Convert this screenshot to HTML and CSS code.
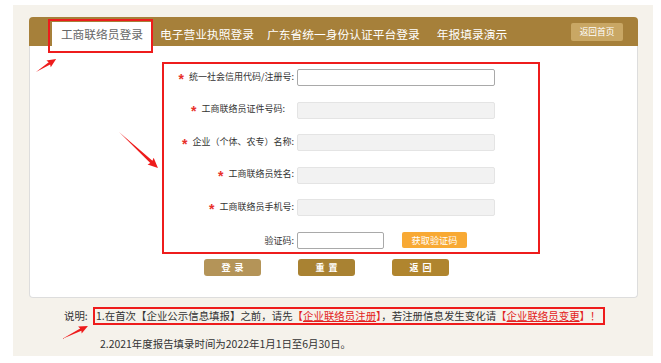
FILE: index.html
```html
<!DOCTYPE html>
<html lang="zh-CN">
<head>
  <meta charset="UTF-8">
  <meta name="viewport" content="width=device-width, initial-scale=1.0">
  <title>工商联络员登录</title>
  <link rel="stylesheet" href="styles.css">
</head>
<body>
  <div class="page">
    <div class="panel">
      <div class="tabs">
        <a class="tab active">工商联络员登录</a>
        <a class="tab tab-2">电子营业执照登录</a>
        <a class="tab tab-3">广东省统一身份认证平台登录</a>
        <a class="tab tab-4">年报填录演示</a>
        <a class="home-btn">返回首页</a>
      </div>
      <div class="panel-body">
        <div class="login-form">
          <div class="row">
            <label class="label"><span class="star">*</span>统一社会信用代码/注册号:</label>
            <input class="field" type="text">
          </div>
          <div class="row">
            <label class="label label-shift"><span class="star">*</span>工商联络员证件号码:</label>
            <input class="field disabled" type="text" disabled>
          </div>
          <div class="row">
            <label class="label"><span class="star">*</span>企业（个体、农专）名称:</label>
            <input class="field disabled" type="text" disabled>
          </div>
          <div class="row">
            <label class="label"><span class="star">*</span>工商联络员姓名:</label>
            <input class="field disabled" type="text" disabled>
          </div>
          <div class="row">
            <label class="label"><span class="star">*</span>工商联络员手机号:</label>
            <input class="field disabled" type="text" disabled>
          </div>
          <div class="row">
            <label class="label">验证码:</label>
            <input class="field code" type="text">
            <button class="code-btn">获取验证码</button>
          </div>
        </div>
        <div class="actions">
          <button class="btn btn-login">登&nbsp;&nbsp;录</button>
          <button class="btn btn-reset">重&nbsp;&nbsp;置</button>
          <button class="btn btn-back">返&nbsp;&nbsp;回</button>
        </div>
      </div>
    </div>

    <div class="notes">
      <p class="note-line">
        <span class="note-title">说明:</span><span class="note-box">1.在首次【企业公示信息填报】之前，请先<span class="red">【<u>企业联络员注册</u>】</span>，若注册信息发生变化请<span class="red">【<u>企业联络员变更</u>】！</span></span>
      </p>
      <p class="note-line second">2.2021年度报告填录时间为2022年1月1日至6月30日。</p>
    </div>
  </div>

  <!-- annotation arrows -->
  <svg class="arrows" width="661" height="363" viewBox="0 0 661 363">
    <g transform="translate(36 72) rotate(-33)">
      <polygon points="0,0 16,-1.3 15,-4 24,0 15,4 16,1.3"/>
    </g>
    <g transform="translate(119 132) rotate(42.7)">
      <polygon points="0,0 44,-1.6 43,-4.5 53,0 43,4.5 44,1.6"/>
    </g>
    <g transform="translate(62 339) rotate(-26.6)">
      <polygon points="0,0 21,-1.3 20,-4 29,0 20,4 21,1.3"/>
    </g>
  </svg>
</body>
</html>
```

FILE: styles.css
```css
body {
  margin: 0;
  background: #fff;
  font-family: "Noto Sans CJK SC", "Noto Sans", sans-serif;
  color: #333;
}
.page {
  width: 640px;
  height: 351px;
  margin: 5px 0 0 13px;
  padding: 12px 15px 0 16px;
  box-sizing: border-box;
  background: #f5f2eb;
}
.panel {
  width: 609px;
}
.tabs {
  display: flex;
  align-items: flex-end;
  height: 29px;
  padding-left: 23px;
  background: #a6803a;
  border-radius: 4px 4px 0 0;
}
.tab {
  height: 24px;
  line-height: 24px;
  font-size: 11.75px;
  color: #fff;
  white-space: nowrap;
}
.tab.active {
  position: relative;
  width: 100px;
  text-align: center;
  background: #fff;
  color: #666;
}
.tab.active::after {
  content: "";
  position: absolute;
  top: -3px;
  left: -4px;
  right: -1px;
  bottom: -7px;
  border: 2px solid #ee1c1c;
}
.tab-2 { margin-left: 8px; }
.tab-3 { margin-left: 13px; }
.tab-4 { margin-left: 17px; }
.home-btn {
  align-self: flex-start;
  margin: 6px 15px 0 auto;
  width: 52px;
  height: 18px;
  line-height: 18px;
  text-align: center;
  font-size: 8.7px;
  color: #fff;
  background: #c9a764;
  border-radius: 2px;
}
.panel-body {
  height: 252px;
  padding: 16px 0 0 132px;
  box-sizing: border-box;
  background: #fff;
  border: 1px solid #ddd;
  border-top: none;
  border-radius: 0 0 4px 4px;
}
.login-form {
  display: flex;
  flex-direction: column;
  gap: 15.6px;
  width: 378px;
  height: 192px;
  padding-top: 5px;
  box-sizing: border-box;
  border: 2px solid #ee1c1c;
}
.row {
  display: flex;
  align-items: center;
  height: 17px;
}
.label {
  width: 130px;
  text-align: right;
  font-size: 9px;
  line-height: 17px;
  white-space: nowrap;
  color: #333;
}
.label-shift {
  padding-right: 9px;
  box-sizing: border-box;
}
.star {
  margin-right: 5px;
  font-family: "Liberation Sans", sans-serif;
  font-size: 14px;
  font-weight: bold;
  color: #e8302a;
  vertical-align: -4px;
}
.field {
  width: 198px;
  height: 17px;
  margin: 0 0 0 3px;
  padding: 0 4px;
  box-sizing: border-box;
  border: 1px solid #a9a9a9;
  border-radius: 2px;
  background: #fff;
  font-size: 9px;
}
.field.disabled {
  background: #f2f2f2;
  border-color: #e4e4e4;
}
.field.code {
  width: 87px;
}
.code-btn {
  width: 65px;
  height: 16px;
  margin: -1px 0 0 18px;
  padding: 0;
  border: none;
  border-radius: 2px;
  background: #f8a934;
  color: #fff;
  font-family: inherit;
  font-size: 9.2px;
  line-height: 16px;
}
.actions {
  display: flex;
  gap: 37px;
  margin-top: 5px;
  padding-left: 42px;
}
.btn {
  width: 57px;
  height: 17px;
  padding: 0;
  border: none;
  border-radius: 3px;
  color: #fff;
  font-family: inherit;
  font-size: 9px;
  font-weight: bold;
  line-height: 17px;
}
.btn-login { background: #b49458; }
.btn-reset { background: #a98232; }
.btn-back { background: #b0852e; }
.notes {
  padding-top: 9px;
  margin-left: -16px;
  font-size: 10.45px;
}
.note-line {
  margin: 0;
  padding-left: 51px;
  height: 18px;
  line-height: 18px;
  white-space: nowrap;
}
.note-title {
  display: inline-block;
  width: 29px;
}
.note-box {
  display: inline-block;
  height: 18px;
  padding: 0 3px 0 1px;
  box-sizing: border-box;
  line-height: 14px;
  border: 2px solid #ee1c1c;
  vertical-align: top;
}
.red {
  color: #e32222;
}
.note-line.second {
  margin-top: 12px;
  padding-left: 87px;
  height: 14px;
  line-height: 14px;
}
.arrows {
  position: absolute;
  left: 0;
  top: 0;
  pointer-events: none;
  fill: #ee1c1c;
}
```
